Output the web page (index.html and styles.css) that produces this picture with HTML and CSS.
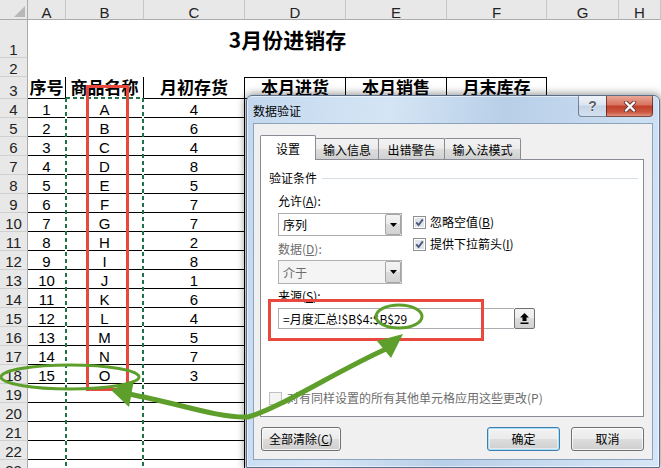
FILE: index.html
```html
<!DOCTYPE html>
<html>
<head>
<meta charset="utf-8">
<title>数据验证</title>
<link rel="stylesheet" href="styles.css">
</head>
<body>
<div class="sheet">
  <div class="corner"><span class="tri"></span></div>
  <div class="ch">A</div><div class="ch">B</div><div class="ch">C</div><div class="ch">D</div><div class="ch">E</div><div class="ch">F</div><div class="ch">G</div><div class="ch">H</div>

  <div class="rh">1</div><div class="title">3月份进销存</div><div class="blank"></div><div class="blank"></div>
  <div class="rh">2</div><div class="blank span8"></div>
  <div class="rh">3</div><div class="th">序号</div><div class="th">商品名称</div><div class="th">月初存货</div><div class="th top">本月进货</div><div class="th top">本月销售</div><div class="th top">月末库存</div><div class="blank"></div><div class="blank"></div>

  <div class="rh">4</div><div class="td">1</div><div class="td">A</div><div class="td">4</div><div class="rest"></div>
  <div class="rh">5</div><div class="td">2</div><div class="td">B</div><div class="td">6</div><div class="rest"></div>
  <div class="rh">6</div><div class="td">3</div><div class="td">C</div><div class="td">4</div><div class="rest"></div>
  <div class="rh">7</div><div class="td">4</div><div class="td">D</div><div class="td">8</div><div class="rest"></div>
  <div class="rh">8</div><div class="td">5</div><div class="td">E</div><div class="td">5</div><div class="rest"></div>
  <div class="rh">9</div><div class="td">6</div><div class="td">F</div><div class="td">7</div><div class="rest"></div>
  <div class="rh">10</div><div class="td">7</div><div class="td">G</div><div class="td">7</div><div class="rest"></div>
  <div class="rh">11</div><div class="td">8</div><div class="td">H</div><div class="td">2</div><div class="rest"></div>
  <div class="rh">12</div><div class="td">9</div><div class="td">I</div><div class="td">8</div><div class="rest"></div>
  <div class="rh">13</div><div class="td">10</div><div class="td">J</div><div class="td">1</div><div class="rest"></div>
  <div class="rh">14</div><div class="td">11</div><div class="td">K</div><div class="td">6</div><div class="rest"></div>
  <div class="rh">15</div><div class="td">12</div><div class="td">L</div><div class="td">4</div><div class="rest"></div>
  <div class="rh">16</div><div class="td">13</div><div class="td">M</div><div class="td">5</div><div class="rest"></div>
  <div class="rh">17</div><div class="td">14</div><div class="td">N</div><div class="td">7</div><div class="rest"></div>
  <div class="rh">18</div><div class="td">15</div><div class="td">O</div><div class="td">3</div><div class="rest"></div>
  <div class="rh">19</div><div class="td"></div><div class="td"></div><div class="td"></div><div class="rest"></div>
  <div class="rh">20</div><div class="td"></div><div class="td"></div><div class="td"></div><div class="rest"></div>
  <div class="rh">21</div><div class="td"></div><div class="td"></div><div class="td"></div><div class="rest"></div>
  <div class="rh">22</div><div class="td"></div><div class="td"></div><div class="td"></div><div class="rest"></div>
  <div class="rh">23</div><div class="td"></div><div class="td"></div><div class="td"></div><div class="rest"></div>
</div>

<div class="dlg">
  <div class="titlebar">
    <span class="dtitle">数据验证</span>
    <div class="capbtns">
      <div class="cap help">?</div>
      <div class="cap close">
        <svg width="14" height="11" viewBox="0 0 14 11"><path d="M3 1.5 L11 9.5 M11 1.5 L3 9.5" stroke="#6b3a36" stroke-width="4.2" stroke-linecap="round"/><path d="M3 1.5 L11 9.5 M11 1.5 L3 9.5" stroke="#fff" stroke-width="2.4" stroke-linecap="round"/></svg>
      </div>
    </div>
  </div>
  <div class="client">
    <div class="tabs">
      <div class="tab sel w1">设置</div>
      <div class="tab w2">输入信息</div>
      <div class="tab w3">出错警告</div>
      <div class="tab w4">输入法模式</div>
    </div>
    <div class="panel">
      <div class="legend">验证条件</div>
      <div class="sec">
        <div class="lbl">允许(<u>A</u>):</div>
        <div class="row">
          <div class="lcol">
            <div class="combo"><span>序列</span><span class="dd"><svg width="7" height="4" viewBox="0 0 7 4"><path d="M0 0H7L3.5 4Z" fill="#000"/></svg></span></div>
            <div class="lbl dis l2">数据(<u>D</u>):</div>
            <div class="combo dis"><span>介于</span><span class="dd"><svg width="7" height="4" viewBox="0 0 7 4"><path d="M0 0H7L3.5 4Z" fill="#000"/></svg></span></div>
          </div>
          <div class="rcol">
            <div class="chk"><svg class="cb" width="13" height="13" viewBox="0 0 13 13"><rect x=".5" y=".5" width="12" height="12" fill="#fff" stroke="#8e8f8f"/><rect x="2" y="2" width="9" height="9" fill="#e1e5ea"/><path d="M3.2 6.4 L5.6 9 L9.8 3.4" fill="none" stroke="#4b5a7e" stroke-width="1.9"/></svg><span>忽略空值(<u>B</u>)</span></div>
            <div class="chk"><svg class="cb" width="13" height="13" viewBox="0 0 13 13"><rect x=".5" y=".5" width="12" height="12" fill="#fff" stroke="#8e8f8f"/><rect x="2" y="2" width="9" height="9" fill="#e1e5ea"/><path d="M3.2 6.4 L5.6 9 L9.8 3.4" fill="none" stroke="#4b5a7e" stroke-width="1.9"/></svg><span>提供下拉箭头(<u>I</u>)</span></div>
          </div>
        </div>
        <div class="lbl l3">来源(<u>S</u>):</div>
        <div class="src">
          <div class="inp">=月度汇总!$B$4:$B$29</div>
          <div class="rb"><svg width="9" height="11" viewBox="0 0 9 11"><path d="M4.5 0 L9 4.5 H6.5 V8 H2.5 V4.5 H0 Z" fill="#000"/><rect x="0.5" y="9.5" width="8" height="1.5" fill="#000"/></svg></div>
        </div>
      </div>
      <div class="apply"><svg width="13" height="13" viewBox="0 0 13 13"><rect x=".5" y=".5" width="12" height="12" fill="#f4f4f4" stroke="#c0c0c0"/></svg><span>对有同样设置的所有其他单元格应用这些更改(P)</span></div>
    </div>
    <div class="btns">
      <div class="btn b1">全部清除(<u>C</u>)</div>
      <div class="btn b2 def">确定</div>
      <div class="btn b3">取消</div>
    </div>
  </div>
</div>

<svg class="ov" width="661" height="468" viewBox="0 0 661 468">
  <path d="M66 98 V468 M143 98 V468 M66 98 H143" stroke="#fff" stroke-width="2" fill="none"/>
  <path d="M66 98 V468 M143 98 V468 M66 98 H143" stroke="#217346" stroke-width="2" stroke-dasharray="4 3" fill="none"/>
  <rect x="87.5" y="86.5" width="40" height="303" fill="none" stroke="#e9483f" stroke-width="3"/>
  <rect x="269.5" y="300.5" width="213" height="39" fill="none" stroke="#e9483f" stroke-width="3"/>
  <ellipse cx="70" cy="377" rx="69" ry="12" fill="none" stroke="#5e9f2c" stroke-width="3"/>
  <ellipse cx="399" cy="316.5" rx="23" ry="11.5" fill="none" stroke="#5e9f2c" stroke-width="3"/>
  <path d="M128 394 C175 402, 215 418, 248 417 C280 408, 335 372, 386 349" fill="none" stroke="#5e9f2c" stroke-width="5"/>
  <polygon points="111,390 134,380 129,407" fill="#5e9f2c"/>
  <polygon points="403,334 377,341 391,358" fill="#5e9f2c"/>
</svg>
</body>
</html>
```

FILE: styles.css
```css
* { box-sizing: border-box; margin: 0; padding: 0; }
html, body { width: 661px; height: 468px; overflow: hidden; background: #fff; }
body { position: relative; font-family: "Liberation Sans", "Noto Sans CJK SC", sans-serif; color: #000; }

/* ---------- spreadsheet ---------- */
.sheet {
  display: grid;
  grid-template-columns: 28px 38px 78px 101px 101px 101px 100px 72px 42px;
  grid-template-rows: 20px 38px 19px 22px;
  grid-auto-rows: 19px;
}
.corner {
  background: #e8e8e8;
  border-right: 1px solid #ababab;
  border-bottom: 1px solid #ababab;
  display: flex; align-items: flex-end; justify-content: flex-end;
  padding: 0 2px 2px 0;
}
.tri { width: 0; height: 0; border-left: 11px solid transparent; border-bottom: 11px solid #b8b8b8; }
.ch {
  background: #e8e8e8;
  border-right: 1px solid #c6c6c6;
  border-bottom: 1px solid #ababab;
  text-align: center;
  font-size: 15px; line-height: 15px; padding-top: 5px;
  color: #222;
}
.rh {
  background: #e8e8e8;
  border-right: 1px solid #ababab;
  border-bottom: 1px solid #cfcfcf;
  display: flex; align-items: flex-end; justify-content: center;
  font-size: 15px; line-height: 15px;
  color: #222;
}
.title {
  grid-column: span 6;
  display: flex; align-items: center; justify-content: center;
  font-family: "Noto Sans CJK SC", sans-serif;
  font-weight: 700; font-size: 21px; line-height: 24px;
}
.blank { background: #fff; }
.span8 { grid-column: span 8; }
.rest { grid-column: span 5; }
.th {
  border-right: 1px solid #000; border-bottom: 1px solid #000;
  display: flex; align-items: flex-end; justify-content: center;
  font-family: "Noto Sans CJK SC", sans-serif;
  font-weight: 700; font-size: 17px; line-height: 17px; padding-bottom: 3px;
}
.th.top { border-top: 1px solid #000; }
.td {
  border-right: 1px solid #000; border-bottom: 1px solid #000;
  display: flex; align-items: flex-end; justify-content: center;
  font-size: 15px; line-height: 15px;
}

/* ---------- dialog ---------- */
.dlg {
  position: absolute; left: 246px; top: 95px;
  width: 414px; height: 373px;
  border: 1px solid #5b6f8a;
  border-radius: 6px 6px 0 0;
  background: linear-gradient(100deg, #c3d8ee 0%, #d5e5f5 30%, #b8cfe8 55%, #c6daef 75%, #d7e6f6 100%);
  box-shadow: 0 0 8px 1px rgba(0,0,0,.45), inset 0 0 0 1px rgba(255,255,255,.55);
  padding: 0 6px 7px 6px;
  display: flex; flex-direction: column;
  font-family: "Noto Sans CJK SC", sans-serif; font-size: 12px;
}
.titlebar { height: 27px; display: flex; align-items: flex-start; }
.dtitle { margin-top: 7px; line-height: 16px; }
.capbtns { margin-left: auto; display: flex; }
.cap { height: 21px; display: flex; align-items: center; justify-content: center; }
.help {
  width: 28px;
  border: 1px solid rgba(50,65,90,.6); border-top: none; border-right: none;
  border-radius: 0 0 0 4px;
  background: linear-gradient(#eef3f9, #dce5f0 45%, #c5d4e6 50%, #d3e0ef);
  font: bold 14px "Liberation Sans", sans-serif; color: #5a5f66;
  text-shadow: 0 0 2px #fff, 0 0 1px #fff;
}
.close {
  width: 47px;
  border: 1px solid rgba(70,25,20,.65); border-top: none;
  border-radius: 0 0 4px 0;
  background: linear-gradient(#e9a797, #d8725f 45%, #c2402b 50%, #cc5640 80%, #df907d);
}
.client {
  height: 337px;
  background: #f0f0f0;
  border: 1px solid #8da2bd;
  padding: 11px 8px 8px 6px;
  display: flex; flex-direction: column;
}
.tabs { display: flex; align-items: flex-end; height: 24px; position: relative; z-index: 1; }
.tab {
  height: 21px;
  border: 1px solid #898c95; border-bottom: none;
  border-radius: 2px 2px 0 0;
  background: linear-gradient(#f3f3f3, #ebebeb 50%, #dedede 50%, #d0d0d0);
  display: flex; align-items: center; justify-content: center;
  margin-left: -1px;
}
.tab.sel { height: 25px; background: #fff; margin-left: 0; margin-bottom: -1px; position: relative; z-index: 2; }
.w1 { width: 56px; }
.w2 { width: 64px; }
.w3 { width: 67px; }
.w4 { width: 77px; }
.panel {
  height: 258px;
  background: #fff;
  border: 1px solid #898c95;
  padding: 10px 5px 10px 8px;
  display: flex; flex-direction: column;
}
.legend { display: flex; align-items: center; line-height: 16px; }
.legend::after { content: ""; flex: 1; height: 1px; background: #d5dfe5; margin-left: 5px; }
.sec { padding-left: 9px; }
.lbl { line-height: 16px; margin-top: 7px; }
.lbl.l2 { margin-top: 5px; }
.lbl.l3 { margin-top: 4px; }
.dis { color: #6d6d6d; }
.row { display: flex; }
.lcol { width: 124px; }
.combo {
  height: 23px; margin-top: 4px;
  border: 1px solid #abadb3; background: #fff;
  display: flex; align-items: center; padding-left: 4px;
}
.combo.dis { height: 24px; margin-top: 3px; background: #f4f4f4; border-color: #adb2b5; }
.dd {
  margin-left: auto; width: 16px; height: 21px;
  border: 1px solid #a5a5a5; border-radius: 2px;
  background: linear-gradient(#f4f4f4, #ebebeb 50%, #dcdcdc 50%, #d2d2d2);
  display: flex; align-items: center; justify-content: center;
}
.combo.dis .dd { height: 22px; }
.rcol { margin-left: 11px; padding-top: 2px; }
.chk { display: flex; align-items: center; height: 22px; gap: 4px; line-height: 16px; }
.src { display: flex; margin-top: 4px; width: 257px; height: 21px; }
.inp { flex: 1; border: 1px solid #abadb3; border-right: none; background: #fff; padding-left: 4px; line-height: 19px; white-space: nowrap; }
.rb {
  width: 21px;
  border: 1px solid #707070; border-radius: 2px;
  background: linear-gradient(#f4f4f4, #ebebeb 50%, #dddddd 50%, #cfcfcf);
  display: flex; align-items: center; justify-content: center;
}
.apply { margin-top: auto; display: flex; align-items: center; gap: 5px; color: #6d6d6d; line-height: 16px; }
.btns { display: flex; margin-top: 10px; height: 24px; }
.btn {
  height: 24px;
  border: 1px solid #707070; border-radius: 3px;
  background: linear-gradient(#f2f2f2, #ebebeb 50%, #dddddd 50%, #cfcfcf);
  box-shadow: inset 0 0 0 1px rgba(255,255,255,.75);
  display: flex; align-items: center; justify-content: center;
  line-height: 16px;
}
.b1 { width: 80px; margin-left: 1px; }
.b2 { width: 73px; margin-left: auto; }
.b3 { width: 73px; margin-left: 11px; }
.btn.def { border-color: #3c7fb1; box-shadow: inset 0 0 0 1px #a9dcf6, inset 0 0 0 2px rgba(255,255,255,.5); }

/* ---------- annotation overlay ---------- */
.ov { position: absolute; left: 0; top: 0; pointer-events: none; }
```
